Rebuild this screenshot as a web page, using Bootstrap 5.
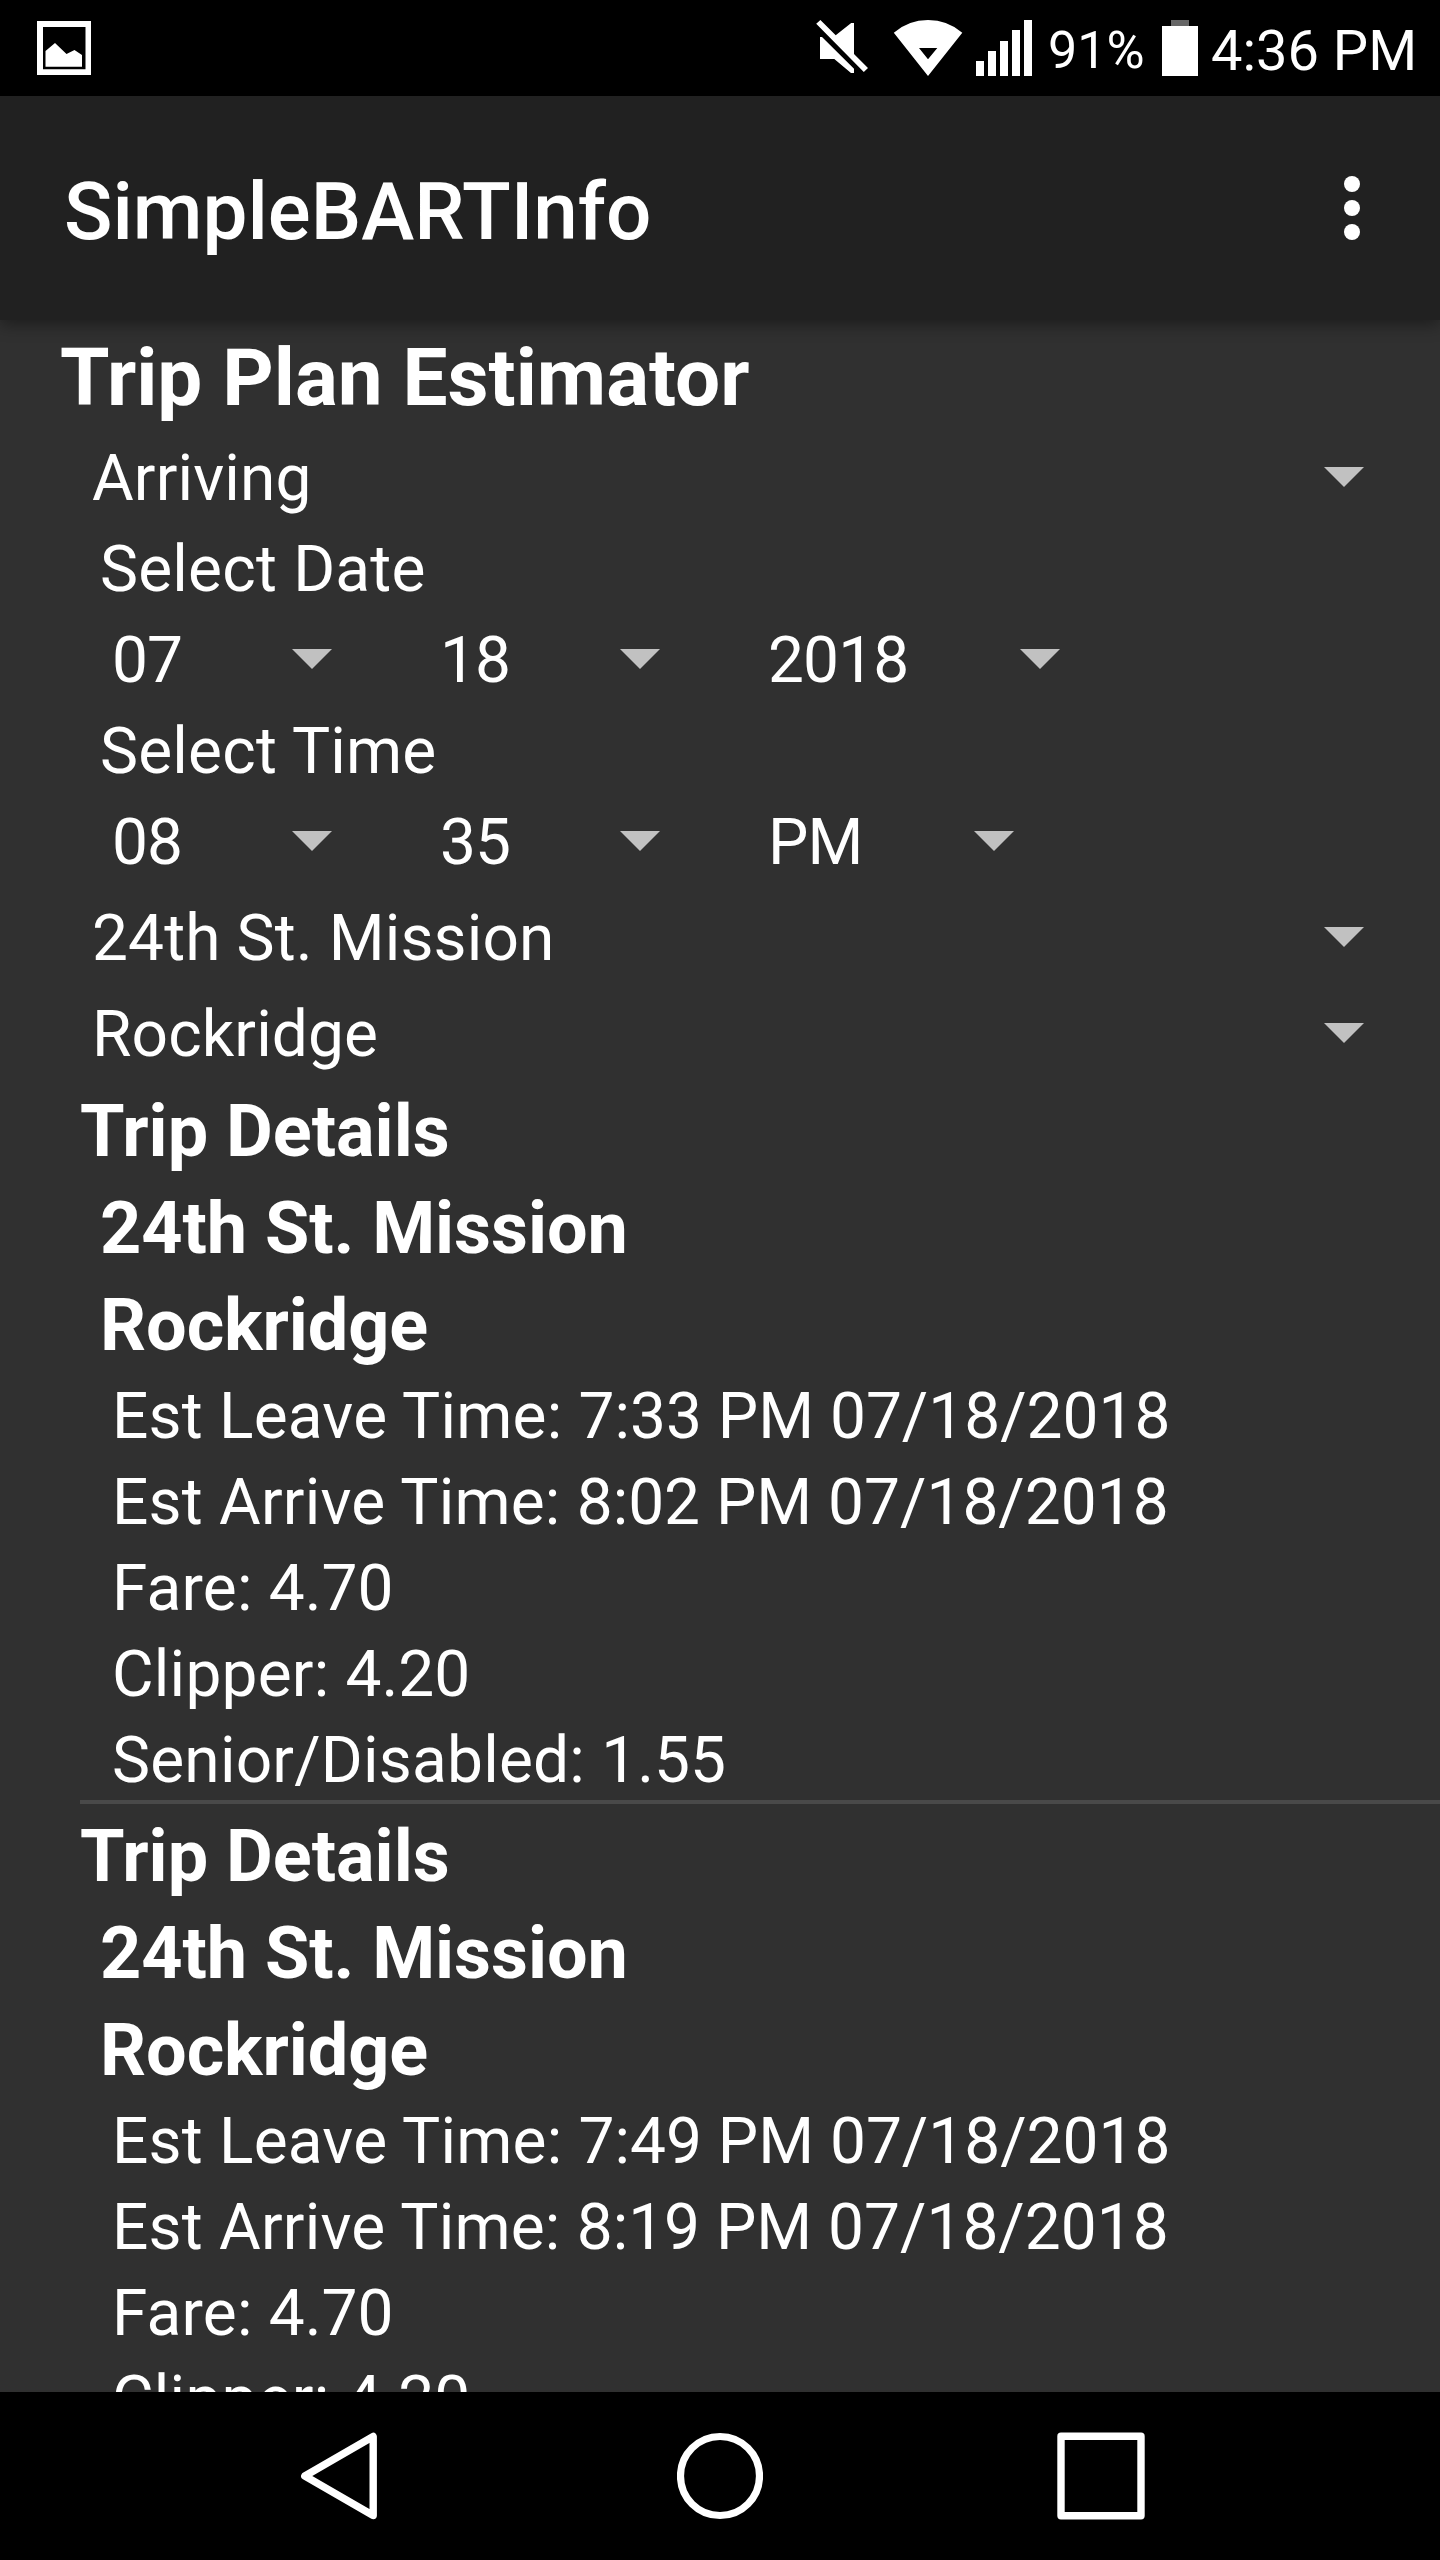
<!DOCTYPE html>
<html lang="en">
<head>
<meta charset="utf-8">
<meta name="viewport" content="width=device-width, initial-scale=1">
<title>SimpleBARTInfo</title>
<link href="https://cdn.jsdelivr.net/npm/bootstrap@5.3.0/dist/css/bootstrap.min.css" rel="stylesheet">
<style>
  body { font-family: Roboto, "Noto Sans", sans-serif; background: #303030; color: #fff; font-size: 64px; }
  svg { display: block; flex: none; }
  .screen { height: 2560px; }
  .status-bar { height: 96px; padding: 0 27px 0 37px; background: #000; line-height: 1; }
  .status-icons { height: 96px; }
  .battery-pct { font-size: 52px; width: 115px; padding: 25px 0 0 1px; line-height: 52px; white-space: nowrap; }
  .clock { font-size: 56px; width: 203px; padding: 23px 0 0 1px; line-height: 56px; white-space: nowrap; }
  .app-bar { height: 224px; padding: 0 80px 0 64px; background: #212121; box-shadow: 0 4px 16px rgba(0,0,0,.42); z-index: 1; }
  .app-title { font-size: 80px; font-weight: 500; line-height: 94px; padding-top: 8px; }
  .page-title { font-size: 80px; font-weight: 700; line-height: 99px; padding: 9px 0 0 60px; margin: 0; height: 107px; }
  .spin { height: 96px; line-height: 90px; }
  .spin > span { padding-top: 7px; }
  .spin-wide { padding: 0 76px 0 92px; letter-spacing: .12px; }
  .spin-row { padding-left: 112px; letter-spacing: -.9px; }
  .spin-cell { width: 328px; padding-right: 108px; }
  .spin-year { width: 292px; }
  .spin-ampm { width: 246px; }
  .line-label { height: 86px; line-height: 80px; padding-top: 7px; }
  .label-indent { padding-left: 100px; letter-spacing: .2px; }
  .trip { margin-left: 80px; border-bottom: 4px solid #494949; }
  .trip-head { font-size: 72px; font-weight: 700; height: 97px; line-height: 89px; padding-top: 8px; margin: 0; }
  .trip-stop { padding-left: 20px; letter-spacing: -.06px; }
  .trip-line { padding-left: 32px; }
  .trip-line > span { letter-spacing: .2px; }
  .nav-keys { height: 168px; background: #000; z-index: 1; padding-left: 301px; }
  .key-home { margin: 0 294px 0 300px; }
</style>
</head>
<body class="overflow-hidden">
<div class="screen d-flex flex-column overflow-hidden">
  <header class="status-bar d-flex justify-content-between flex-shrink-0">
    <svg width="54" height="96" viewBox="37 0 54 96" fill="#fff"><path fill-rule="evenodd" d="M37 21h54v54H37zM43 27v42.300h42.500V27z"/><path d="M45.500 51L55 43l11.500 11L74.500 50l7.500 5v11.700H45.500z"/></svg>
    <div class="status-icons d-flex">
      <svg width="231" height="96" viewBox="816 0 231 96" fill="#fff">
        <path d="M816.200 23.700L820.400 20 835.700 35.300 851.200 23H854V54L868 68 863.800 72z"/>
        <path d="M820 37h2L854 68.700V73h-3L834.300 59H820z"/>
        <path fill-rule="evenodd" d="M893.800 32.700Q908.500 20 928 20T962.300 32.700L928 76zM919 48L928 59.300 937.300 48z"/>
        <path d="M976 61h8v15h-8zM988 51h8v25h-8zM1000 41h8v35h-8zM1012 30h8v46h-8zM1024 20h8v56h-8z"/>
      </svg>
      <span class="battery-pct">91%</span>
      <svg width="48" height="96" viewBox="1162 0 48 96"><path fill="#666" d="M1171 20h18v6h-18z"/><path fill="#fff" d="M1162 26h36v50h-36z"/></svg>
      <span class="clock">4:36 PM</span>
    </div>
  </header>

  <nav class="app-bar d-flex align-items-center justify-content-between flex-shrink-0 position-relative">
    <span class="app-title">SimpleBARTInfo</span>
    <svg width="16" height="64" viewBox="0 0 16 64" fill="#fff"><circle cx="8" cy="8" r="8"/><circle cx="8" cy="32" r="8"/><circle cx="8" cy="56" r="8"/></svg>
  </nav>

  <main class="flex-grow-1 overflow-hidden">
    <h1 class="page-title">Trip Plan Estimator</h1>
    <div class="spin spin-wide d-flex justify-content-between"><span>Arriving</span><svg width="40" height="96" fill="#c1c1c1"><path d="M0 40h40L20 60z"/></svg></div>
    <div class="line-label label-indent">Select Date</div>
    <div class="spin-row d-flex">
      <div class="spin spin-cell d-flex justify-content-between"><span>07</span><svg width="40" height="96" fill="#c1c1c1"><path d="M0 40h40L20 60z"/></svg></div>
      <div class="spin spin-cell d-flex justify-content-between"><span>18</span><svg width="40" height="96" fill="#c1c1c1"><path d="M0 40h40L20 60z"/></svg></div>
      <div class="spin spin-year d-flex justify-content-between"><span>2018</span><svg width="40" height="96" fill="#c1c1c1"><path d="M0 40h40L20 60z"/></svg></div>
    </div>
    <div class="line-label label-indent">Select Time</div>
    <div class="spin-row d-flex">
      <div class="spin spin-cell d-flex justify-content-between"><span>08</span><svg width="40" height="96" fill="#c1c1c1"><path d="M0 40h40L20 60z"/></svg></div>
      <div class="spin spin-cell d-flex justify-content-between"><span>35</span><svg width="40" height="96" fill="#c1c1c1"><path d="M0 40h40L20 60z"/></svg></div>
      <div class="spin spin-ampm d-flex justify-content-between"><span>PM</span><svg width="40" height="96" fill="#c1c1c1"><path d="M0 40h40L20 60z"/></svg></div>
    </div>
    <div class="spin spin-wide d-flex justify-content-between"><span>24th St. Mission</span><svg width="40" height="96" fill="#c1c1c1"><path d="M0 40h40L20 60z"/></svg></div>
    <div class="spin spin-wide d-flex justify-content-between"><span>Rockridge</span><svg width="40" height="96" fill="#c1c1c1"><path d="M0 40h40L20 60z"/></svg></div>

    <section class="trip">
      <h2 class="trip-head">Trip Details</h2>
      <h3 class="trip-head trip-stop">24th St. Mission</h3>
      <h3 class="trip-head trip-stop">Rockridge</h3>
      <div class="line-label trip-line"><span>Est Leave Time: </span>7:33 PM 07/18/2018</div>
      <div class="line-label trip-line"><span>Est Arrive Time: </span>8:02 PM 07/18/2018</div>
      <div class="line-label trip-line"><span>Fare: </span>4.70</div>
      <div class="line-label trip-line"><span>Clipper: </span>4.20</div>
      <div class="line-label trip-line"><span>Senior/Disabled: </span>1.55</div>
    </section>
    <section class="trip">
      <h2 class="trip-head">Trip Details</h2>
      <h3 class="trip-head trip-stop">24th St. Mission</h3>
      <h3 class="trip-head trip-stop">Rockridge</h3>
      <div class="line-label trip-line"><span>Est Leave Time: </span>7:49 PM 07/18/2018</div>
      <div class="line-label trip-line"><span>Est Arrive Time: </span>8:19 PM 07/18/2018</div>
      <div class="line-label trip-line"><span>Fare: </span>4.70</div>
      <div class="line-label trip-line"><span>Clipper: </span>4.20</div>
    </section>
  </main>

  <footer class="nav-keys d-flex align-items-center flex-shrink-0">
    <svg width="76" height="88" viewBox="301 2432 76 88" fill="none" stroke="#fff" stroke-width="7.400" stroke-linejoin="round"><path d="M373.200 2436.500v79L304.800 2476z"/></svg>
    <svg class="key-home" width="86" height="88" viewBox="677 2432 86 88" fill="none" stroke="#fff" stroke-width="7.200"><circle cx="720" cy="2476" r="39.500"/></svg>
    <svg width="88" height="88" viewBox="1057 2432 88 88" fill="none" stroke="#fff" stroke-width="7.400" stroke-linejoin="round"><path d="M1061 2436.200h80v79.600h-80z"/></svg>
  </footer>
</div>
<script src="https://cdn.jsdelivr.net/npm/bootstrap@5.3.0/dist/js/bootstrap.bundle.min.js"></script>
</body>
</html>
